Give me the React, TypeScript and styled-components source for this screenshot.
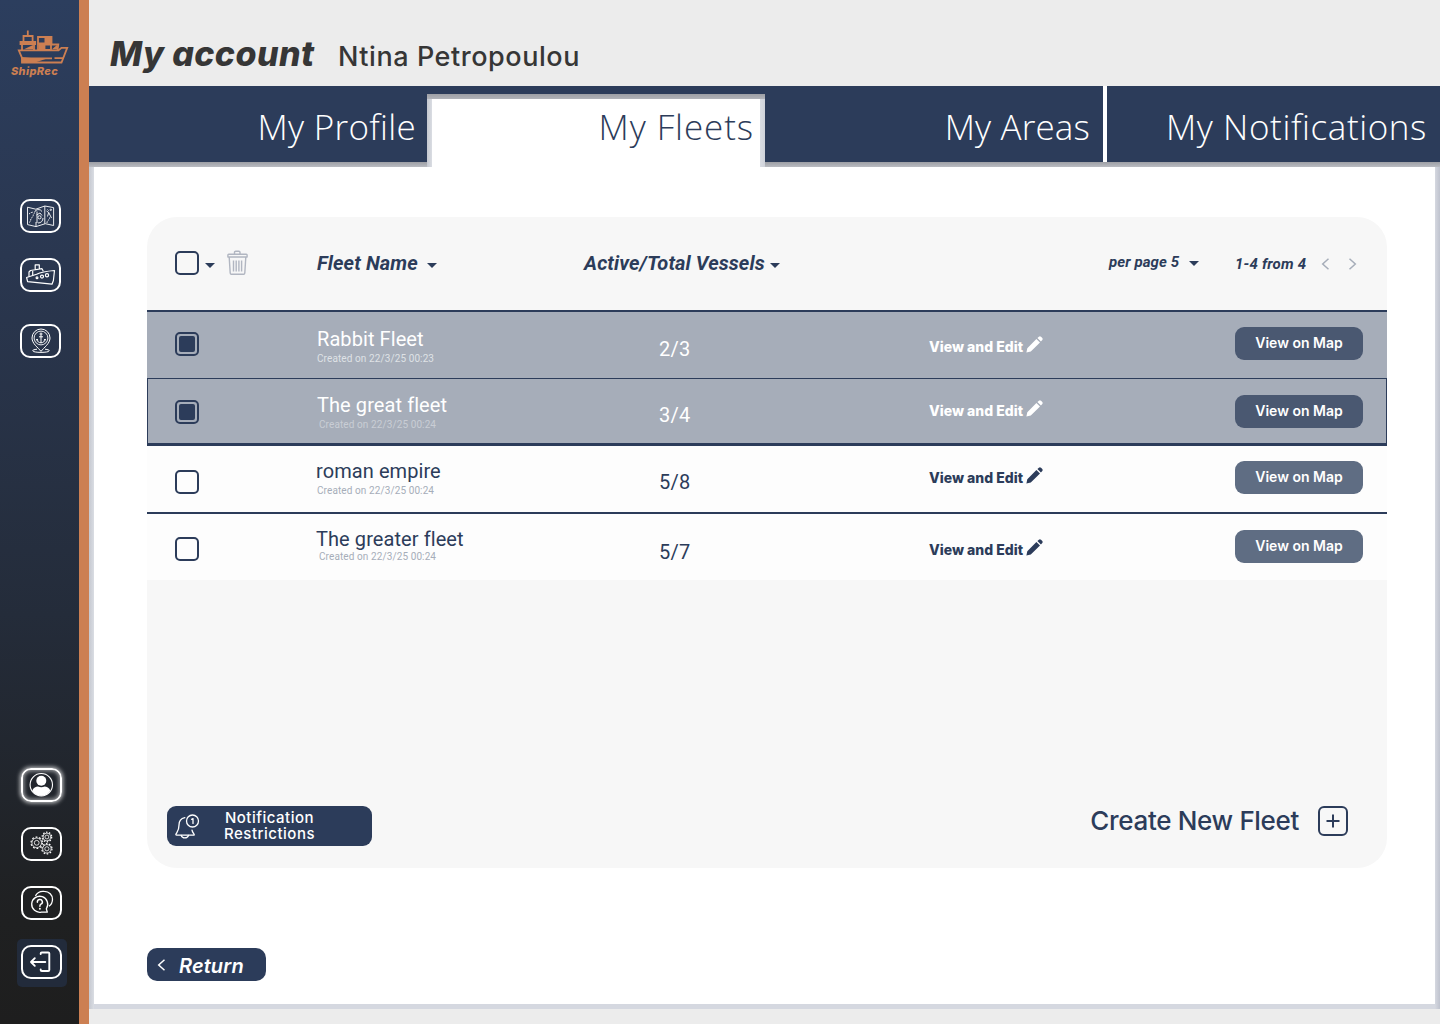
import React from "react";
import styled, { createGlobalStyle, css } from "styled-components";

const navy = "#2c3c5a";
const orange = "#cc7f52";

const GlobalStyle = createGlobalStyle`
  *, *::before, *::after { box-sizing: border-box; }
  body { margin: 0; background: #ececec; font-family: Inter, "Liberation Sans", sans-serif; }
  button { border: 0; padding: 0; margin: 0; background: none; color: inherit; font: inherit; cursor: pointer; }
  svg { display: block; flex: none; }
`;

const Page = styled.div`
  display: flex;
  width: 1440px;
  height: 1024px;
  overflow: hidden;
  background: #ececec;
`;

/* ---------- sidebar ---------- */

const Sidebar = styled.aside`
  flex: none;
  width: 89px;
  height: 100%;
  border-right: 10px solid ${orange};
  background: linear-gradient(180deg, #2c3e5e 0%, #2a3750 25%, #242c3a 60%, #1f2021 90%, #1e1e1e 100%);
  display: flex;
  flex-direction: column;
`;

const Brand = styled.div`
  height: 79px;
  padding: 30px 0 0 11px;
  color: ${orange};
`;

const BrandName = styled.div`
  margin-top: 0;
  font: italic 800 11px/12px Inter, sans-serif;
  letter-spacing: 0.35px;
`;

const TopNav = styled.nav`
  margin-top: 120px;
  padding-left: 20px;
  display: flex;
  flex-direction: column;
`;

const BottomNav = styled.nav`
  margin-top: auto;
  padding: 0 0 37px 17px;
  display: flex;
  flex-direction: column;
  gap: 11px;
`;

const NavSlot = styled.div<{ $lit?: boolean }>`
  width: 50px;
  height: 48px;
  padding: 6px 0 0 4px;
  border-radius: 5px;
  background: ${(p) => (p.$lit ? "#222b3b" : "transparent")};
`;

const NavButton = styled.button<{ $glow?: boolean; $gap?: number }>`
  display: block;
  width: 41px;
  height: 34px;
  margin-bottom: ${(p) => p.$gap ?? 0}px;
  border: 2px solid #fff;
  border-radius: 10px;
  color: #fff;
  ${(p) =>
    p.$glow &&
    css`
      box-shadow: 0 0 4px 1px rgba(255, 255, 255, 0.75), inset 0 0 4px 1px rgba(255, 255, 255, 0.6);
    `}
  svg { margin: -2px; }
`;

/* ---------- header and tabs ---------- */

const Main = styled.main`
  width: 1351px;
  display: flex;
  flex-direction: column;
`;

const Header = styled.header`
  height: 86px;
  padding: 34px 0 0 21px;
  display: flex;
  align-items: baseline;
  color: #363636;
`;

const Title = styled.h1`
  width: 228px;
  margin: 0;
  font: italic 800 34px/40px Inter, sans-serif;
  letter-spacing: 0.4px;
  white-space: nowrap;
`;

const UserName = styled.span`
  font: 450 27px/40px Inter, sans-serif;
  letter-spacing: 0.55px;
  white-space: nowrap;
`;

const TabBar = styled.div`
  display: flex;
  height: 76px;
  background: ${navy};
`;

const Tab = styled.button<{ $width: number; $right: number; $spacing: number; $divider?: boolean }>`
  flex: none;
  width: ${(p) => p.$width}px;
  height: 76px;
  padding: 0 ${(p) => p.$right}px 0 0;
  border-right: ${(p) => (p.$divider ? "4px solid #fff" : "0")};
  color: #fff;
  text-align: right;
  font: 300 35px/82px "Open Sans", sans-serif;
  letter-spacing: ${(p) => p.$spacing}px;
  white-space: nowrap;
`;

const ActiveTab = styled(Tab)`
  height: 73px;
  margin-top: 8px;
  padding-right: ${(p) => p.$right}px;
  padding-bottom: 7px;
  line-height: 66px;
  color: ${navy};
  background:
    linear-gradient(180deg, #9d9fa5, #b1b3b9) 0 0 / 100% 5px no-repeat,
    linear-gradient(90deg, #c5c8d0, #dadde3) 0 0 / 5px 100% no-repeat,
    linear-gradient(90deg, #dadde3, #cfd2da) 100% 0 / 5px 100% no-repeat,
    #fff;
  z-index: 1;
`;

const Panel = styled.section`
  height: 847px;
  padding: 55px 0 0 58px;
  background:
    linear-gradient(180deg, #9d9fa5, #b9bbc1) 0 0 / 100% 5px no-repeat,
    linear-gradient(90deg, #c5c8d0, #dadde3) 0 0 / 5px 100% no-repeat,
    linear-gradient(90deg, #d5d8e0, #bfc3ce) 100% 0 / 5px 100% no-repeat,
    linear-gradient(#d5d8e0, #d5d8e0) 0 100% / 100% 5px no-repeat,
    #fff;
`;

/* ---------- fleets card ---------- */

const Card = styled.div`
  width: 1240px;
  height: 651px;
  border-radius: 30px;
  background: #f7f7f7;
  display: flex;
  flex-direction: column;
`;

const Toolbar = styled.div`
  height: 93px;
  padding: 0 30px 2px 28px;
  display: flex;
  align-items: center;
  color: ${navy};
`;

const SelectTools = styled.div`
  width: 142px;
  display: flex;
  align-items: center;
`;

const Heading = styled.button<{ $width: number; $gap: number; $spacing: number }>`
  width: ${(p) => p.$width}px;
  display: flex;
  align-items: center;
  gap: ${(p) => p.$gap}px;
  font: italic 700 20px/24px Roboto, sans-serif;
  letter-spacing: ${(p) => p.$spacing}px;
  white-space: nowrap;
  svg { margin-top: 5px; }
`;

const Pager = styled.div`
  margin-left: auto;
  display: flex;
  align-items: center;
  font: italic 700 15px/20px Roboto, sans-serif;
  letter-spacing: 0.2px;
  white-space: nowrap;
`;

const PerPage = styled.button`
  width: 126px;
  display: flex;
  align-items: center;
  gap: 10px;
  margin-top: -2px;
  letter-spacing: 0.1px;
  svg { margin-top: 4px; }
`;

const Range = styled.span`
  width: 86px;
  padding-top: 2px;
`;

const PageStep = styled.button`
  width: 27px;
  padding-top: 2px;
  color: #a6adb9;
  &:last-child { width: 9px; }
`;

const Box = styled.span<{ $checked?: boolean }>`
  flex: none;
  display: block;
  width: 24px;
  height: 24px;
  padding: 2px;
  border: 2px solid ${navy};
  border-radius: 5px;
  &::after {
    content: "";
    display: ${(p) => (p.$checked ? "block" : "none")};
    height: 16px;
    border-radius: 2px;
    background: ${navy};
  }
`;

const TrashButton = styled.button`
  margin-left: 11.5px;
`;

const Rows = styled.div`
  border-top: 2px solid ${navy};
`;

const Row = styled.div<{ $kind: "plain" | "selected" | "focused" | "divided" }>`
  display: grid;
  grid-template-columns: 142px 342px 270px 306px 128px;
  align-items: start;
  height: 66px;
  padding-left: 28px;
  color: ${navy};
  background: #fdfdfd;
  ${(p) =>
    (p.$kind === "selected" || p.$kind === "focused") &&
    css`
      color: #fff;
      background: #a6adb9;
    `}
  ${(p) =>
    p.$kind === "focused" &&
    css`
      height: 68px;
      padding-left: 27px;
      border: 1px solid ${navy};
      border-bottom-width: 3px;
    `}
  ${(p) =>
    p.$kind === "divided" &&
    css`
      height: 68px;
      border-bottom: 2px solid ${navy};
    `}
`;

const Cell = styled.div<{ $top: number }>`
  padding-top: ${(p) => p.$top}px;
`;

const FleetName = styled.div<{ $shift: number }>`
  margin-left: ${(p) => p.$shift}px;
  font: 400 20px/24px Roboto, sans-serif;
  letter-spacing: 0.08px;
`;

const Created = styled.div<{ $shift: number; $tone: string; $gap: number }>`
  margin: ${(p) => p.$gap}px 0 0 ${(p) => p.$shift}px;
  color: ${(p) => p.$tone};
  font: 400 10px/12px Roboto, sans-serif;
  letter-spacing: 0.1px;
`;

const Count = styled.div`
  font: 400 20px/24px Roboto, sans-serif;
  letter-spacing: 0.2px;
`;

const EditLink = styled.button`
  display: flex;
  align-items: flex-start;
  gap: 3px;
  font: 800 14px/20px Inter, sans-serif;
  letter-spacing: 0;
  white-space: nowrap;
`;

const MapButton = styled.button<{ $soft?: boolean }>`
  width: 128px;
  height: 33px;
  padding-bottom: 1px;
  border-radius: 9px;
  background: ${(p) => (p.$soft ? "#5f6d83" : "#4a5871")};
  color: #fff;
  font: 600 14px/32px Inter, sans-serif;
`;

const Footer = styled.div`
  margin-top: auto;
  padding: 0 39px 22px 20px;
  display: flex;
  justify-content: space-between;
  align-items: flex-end;
`;

const Restrictions = styled.button`
  width: 205px;
  height: 40px;
  padding-left: 8px;
  border-radius: 9px;
  background: ${navy};
  color: #fff;
  display: flex;
  align-items: center;
  gap: 24px;
  text-align: center;
  font: 500 15px/16px Inter, sans-serif;
  letter-spacing: 0.5px;
  svg { margin-top: 1px; }
`;

const Create = styled.button`
  margin-bottom: 10px;
  display: flex;
  align-items: center;
  gap: 19px;
  color: ${navy};
  font: 500 26px/30px Inter, sans-serif;
  letter-spacing: -0.33px;
  white-space: nowrap;
`;

const Return = styled.button`
  width: 119px;
  height: 33px;
  margin-top: 80px;
  padding: 3px 0 0 10px;
  border-radius: 10px;
  background: ${navy};
  color: #fff;
  display: flex;
  align-items: center;
  gap: 13px;
  font: italic 600 20px/30px Inter, sans-serif;
  letter-spacing: 0.1px;
  svg { margin-top: -2px; }
`;

/* ---------- drawings ---------- */

const Ship = () => (
  <svg width="58" height="35" viewBox="11 30 58 35" fill="none" stroke={orange} strokeWidth="1.8">
    <path d="M27.8 30.5V36M23.5 41.5V36H32.6V41.5M20.5 42H35.2V44H20.5ZM22 44V50M34 44V50" />
    <path d="M38 50V37H51.5V44.5M38 43.5H51M44.5 50V44.5H51V50M51 44.5H58.3L57.5 50M38 50H50" />
    <path d="M38.5 43.5H44.5V37H51V44H45V49.3H39ZM24 49.3L33 45V49.3ZM52 49.3L57 45V49.3Z" fill={orange} stroke="none" />
    <path d="M18.8 50.3H58.5L61.5 47.8H67.2L61.5 62.5H22L22 58Z" />
    <path d="M21 58L31 58.3H52M54.5 58.2H63" />
    <path d="M21.5 58.2H48L35 62.5H21.5Z" fill={orange} stroke="none" />
  </svg>
);

const MapIcon = () => (
  <svg width="41" height="34" viewBox="0 0 41 34" fill="none" stroke="#fff" strokeWidth="0.9">
    <path d="M7.5 8.2L15.8 10.2L24.8 7L33.6 8.6V26.5L25.3 24.7L16 27.6L7.5 25.6Z" />
    <path d="M24.8 7V24.7M16 23V27.6" />
    <path d="M9 15L11 13.6L13.5 13M9 23.5C12 22 9.5 20 12 18.5S12 15 14.5 14.5M27 24C27 20 30 22 29.5 18.5M27.5 10.5L29 12" strokeDasharray="1.6 1" />
    <path d="M14.5 13.5A4 3.6 0 0 1 22 12.5M17 12.5V24M16.5 16L20 14L22 16.5M18 24C21 24 23 22 23 19" />
    <circle cx="19.5" cy="18.3" r="1.6" />
    <path d="M27.5 17.5L28.7 13.5L31.5 19M28.7 13.5L26.5 12" />
    <circle cx="30.8" cy="10.8" r="0.7" />
  </svg>
);

const VesselIcon = () => (
  <svg width="41" height="34" viewBox="0 0 41 34" fill="none" stroke="#fff" strokeWidth="1.2" strokeLinejoin="round">
    <path d="M6.6 19.5L16.6 16.2C21 14 26 13.2 34.5 12.5L33.4 22.5L32 26.2L7.6 23.6Z" />
    <path d="M9 18.7V14L10.5 12.5L22 10.7L23.3 13.2M12.7 17.4V12.2M15.2 11.8V6.8H19.3V11.2" />
    <circle cx="17" cy="19.8" r="0.9" />
    <circle cx="22" cy="18.6" r="1.5" />
    <circle cx="27" cy="17.2" r="1.6" />
  </svg>
);

const AnchorPinIcon = () => (
  <svg width="41" height="34" viewBox="0 0 41 34" fill="none" stroke="#fff" strokeWidth="1">
    <path d="M21 27.4C18 23.5 12 19.5 12 14A9 9 0 0 1 30 14C30 19.5 24 23.5 21 27.4Z" />
    <circle cx="21" cy="14" r="6.9" strokeWidth="0.9" />
    <circle cx="21" cy="10" r="1" />
    <path d="M21 11.2V18.8M19 12.8H23M17 15.2C17.2 17.8 19 18.8 21 18.8S24.8 17.8 25 15.2M16.2 16.4L17 15L18 16.2M24 16.2L25 15L25.8 16.4" />
    <path d="M17 25.2C14 25.6 12.7 26 12.7 26.8C12.7 28.9 29.3 28.9 29.3 26.8C29.3 26 28 25.6 25 25.2" />
  </svg>
);

const UserIcon = () => (
  <svg width="41" height="34" viewBox="0 0 41 34">
    <circle cx="20.3" cy="16.7" r="11.2" fill="none" stroke="#fff" strokeWidth="1.1" />
    <circle cx="20.3" cy="12.8" r="5" fill="#fff" />
    <path d="M11.2 22.7C12.3 19.7 15 18.5 17 18.5C19 19.5 21.6 19.5 23.6 18.5C25.6 18.5 28.3 19.7 29.4 22.7C27.5 25.8 24 27.7 20.3 27.7S13.1 25.8 11.2 22.7Z" fill="#fff" />
  </svg>
);

const Gear = ({ x, y, r }: { x: number; y: number; r: number }) => (
  <g transform={`translate(${x} ${y})`}>
    <circle r={r} />
    <circle r={r + 0.9} strokeWidth="1.2" strokeDasharray={`${((r + 0.9) * Math.PI) / 10} ${((r + 0.9) * Math.PI) / 10}`} />
    <circle r={r * 0.5} />
  </g>
);

const GearsIcon = () => (
  <svg width="41" height="34" viewBox="0 0 41 34" fill="none" stroke="#fff" strokeWidth="0.8">
    <Gear x={15.7} y={15.8} r={4.8} />
    <Gear x={25.9} y={10} r={3.9} />
    <Gear x={25.9} y={21.8} r={4.2} />
  </svg>
);

const HelpIcon = () => (
  <svg width="41" height="34" viewBox="0 0 41 34" fill="none" stroke="#fff" strokeWidth="1.3" strokeLinejoin="round">
    <path d="M20.4 26.1A8 8 0 1 1 25.3 22.8L26.3 26.1Z" />
    <path d="M14.4 9.8A9 9 0 0 1 23.3 5.4C28.2 5.4 31.5 9.2 31.5 13.2C31.5 16.5 30.2 18.6 28 20.3" />
    <path d="M16.4 16.2A2.5 2.4 0 1 1 19.9 18.1Q18.9 18.6 18.9 20.2" strokeWidth="1.5" strokeLinecap="round" />
    <circle cx="18.9" cy="22.7" r="1" fill="#fff" stroke="none" />
  </svg>
);

const ExitIcon = () => (
  <svg width="41" height="34" viewBox="0 0 41 34" fill="none" stroke="#fff" strokeWidth="1.9" strokeLinecap="round" strokeLinejoin="round">
    <path d="M19.7 9V8.6Q19.7 7.5 20.8 7.5H27.2Q28.3 7.5 28.3 8.6V24.9Q28.3 26 27.2 26H20.8Q19.7 26 19.7 24.9V24.5M24.3 17H10M13.8 13.2L10 17L13.8 20.8" />
  </svg>
);

const Caret = () => (
  <svg width="10" height="5" viewBox="0 0 10 5">
    <path d="M0 0H10L5 5Z" fill={navy} />
  </svg>
);

const Trash = () => (
  <svg width="22" height="26" viewBox="0 0 22 26" fill="none" stroke="#b1b6c1" strokeWidth="1.4" strokeLinejoin="round">
    <path d="M7.5 4V2.3Q7.5 1.2 8.7 1.2H11.8Q13 1.2 13 2.3V4M1.7 4.2H19.3Q20.1 4.2 20.1 5V7H0.9V5Q0.9 4.2 1.7 4.2ZM2.2 7.2L3.2 23Q3.3 24.2 4.3 24.2H16.7Q17.7 24.2 17.8 23L18.8 7.2M6.5 10.5V21.5M9.2 10.5V21.5M11.9 10.5V21.5M14.6 10.5V21.5" />
  </svg>
);

const Chevron = ({ next }: { next?: boolean }) => (
  <svg width="9" height="12" viewBox="0 0 9 12" fill="none" stroke="currentColor" strokeWidth="1.5">
    <path d={next ? "M1.5 0.8L7.3 6L1.5 11.2" : "M7.5 0.8L1.7 6L7.5 11.2"} />
  </svg>
);

const Pencil = () => (
  <svg width="17" height="17" viewBox="0 0 17 17" fill="currentColor">
    <path d="M0.4 16.6L1.3 12.2L10.4 3L14 6.4L4.8 15.5ZM11.4 2.1L12.9 0.7Q14 -0.1 15 0.7L16.3 2Q17 2.9 16.3 3.9L14.9 5.5Z" />
  </svg>
);

const Bell = () => (
  <svg width="25" height="25" viewBox="0 0 25 25" fill="none" stroke="#fff" strokeWidth="1.3" strokeLinecap="round" strokeLinejoin="round">
    <path d="M9.8 3.6C5.8 4.4 4 7.5 4 11C4 17 1.9 18 0.9 20.3Q0.7 21.2 1.6 21.2H18.6Q19.6 21.2 19.1 20.3C18.3 19.2 17.3 18 17 16.2" />
    <path d="M6.2 21.4C7.4 24.6 12.3 24.6 13.5 21.4" />
    <circle cx="17.5" cy="7" r="6" />
    <path d="M16.6 5.3L18 4.6V9.4" />
  </svg>
);

const Plus = () => (
  <svg width="30" height="30" viewBox="0 0 30 30" fill="none" stroke={navy} strokeWidth="2">
    <rect x="1" y="1" width="28" height="28" rx="5" />
    <path d="M15 8.5V21.5M8.5 15H21.5" />
  </svg>
);

/* ---------- data ---------- */

type Fleet = {
  name: string;
  created: string;
  count: string;
  kind: "plain" | "selected" | "focused" | "divided";
  tops: [number, number, number, number, number];
  nameShift: number;
  dateShift: number;
  dateGap: number;
  tone: string;
};

const fleets: Fleet[] = [
  { name: "Rabbit Fleet", created: "Created on 22/3/25 00:23", count: "2/3", kind: "selected", tops: [20, 15, 25, 24, 15], nameShift: 0, dateShift: 0, dateGap: 2, tone: "#dfe2e6" },
  { name: "The great fleet", created: "Created on 22/3/25 00:24", count: "3/4", kind: "focused", tops: [21, 14, 24, 21, 16], nameShift: 0, dateShift: 2, dateGap: 2, tone: "#c9cdd5" },
  { name: "roman empire", created: "Created on 22/3/25 00:24", count: "5/8", kind: "divided", tops: [24, 13, 24, 21, 15], nameShift: -1, dateShift: 0, dateGap: 2, tone: "#a6adb9" },
  { name: "The greater fleet", created: "Created on 22/3/25 00:24", count: "5/7", kind: "plain", tops: [23, 13, 26, 25, 16], nameShift: -1, dateShift: 2, dateGap: 0, tone: "#a6adb9" },
];

const EditLabel = styled.span`
  padding-top: 1px;
`;

export default function App() {
  return (
    <Page>
      <GlobalStyle />
      <Sidebar>
        <Brand>
          <Ship />
          <BrandName>ShipRec</BrandName>
        </Brand>
        <TopNav>
          <NavButton $gap={25}><MapIcon /></NavButton>
          <NavButton $gap={32}><VesselIcon /></NavButton>
          <NavButton><AnchorPinIcon /></NavButton>
        </TopNav>
        <BottomNav>
          <NavSlot><NavButton $glow><UserIcon /></NavButton></NavSlot>
          <NavSlot><NavButton><GearsIcon /></NavButton></NavSlot>
          <NavSlot><NavButton><HelpIcon /></NavButton></NavSlot>
          <NavSlot $lit><NavButton><ExitIcon /></NavButton></NavSlot>
        </BottomNav>
      </Sidebar>
      <Main>
        <Header>
          <Title>My account</Title>
          <UserName>Ntina Petropoulou</UserName>
        </Header>
        <TabBar>
          <Tab $width={338} $right={11} $spacing={0.3}>My Profile</Tab>
          <ActiveTab $width={338} $right={11} $spacing={0.9}>My Fleets</ActiveTab>
          <Tab $width={342} $right={13} $spacing={0.15} $divider>My Areas</Tab>
          <Tab $width={333} $right={13} $spacing={0.6}>My Notifications</Tab>
        </TabBar>
        <Panel>
          <Card>
            <Toolbar>
              <SelectTools>
                <Box />
                <Heading $width={16} $gap={0} $spacing={0}><svg width="6" height="5" /><Caret /></Heading>
                <TrashButton><Trash /></TrashButton>
              </SelectTools>
              <Heading $width={267} $gap={9} $spacing={0.12}>Fleet Name <Caret /></Heading>
              <Heading $width={220} $gap={5} $spacing={0.1}>Active/Total Vessels <Caret /></Heading>
              <Pager>
                <PerPage>per page 5 <Caret /></PerPage>
                <Range>1-4 from 4</Range>
                <PageStep><Chevron /></PageStep>
                <PageStep><Chevron next /></PageStep>
              </Pager>
            </Toolbar>
            <Rows>
              {fleets.map((f) => (
                <Row key={f.name} $kind={f.kind}>
                  <Cell $top={f.tops[0]}><Box $checked={f.kind === "selected" || f.kind === "focused"} /></Cell>
                  <Cell $top={f.tops[1]}>
                    <FleetName $shift={f.nameShift}>{f.name}</FleetName>
                    <Created $shift={f.dateShift} $tone={f.tone} $gap={f.dateGap}>{f.created}</Created>
                  </Cell>
                  <Cell $top={f.tops[2]}><Count>{f.count}</Count></Cell>
                  <Cell $top={f.tops[3]}><EditLink><EditLabel>View and Edit</EditLabel><Pencil /></EditLink></Cell>
                  <Cell $top={f.tops[4]}><MapButton $soft={f.kind === "divided" || f.kind === "plain"}>View on Map</MapButton></Cell>
                </Row>
              ))}
            </Rows>
            <Footer>
              <Restrictions><Bell /><span>Notification<br />Restrictions</span></Restrictions>
              <Create>Create New Fleet <Plus /></Create>
            </Footer>
          </Card>
          <Return><Chevron /> Return</Return>
        </Panel>
      </Main>
    </Page>
  );
}
